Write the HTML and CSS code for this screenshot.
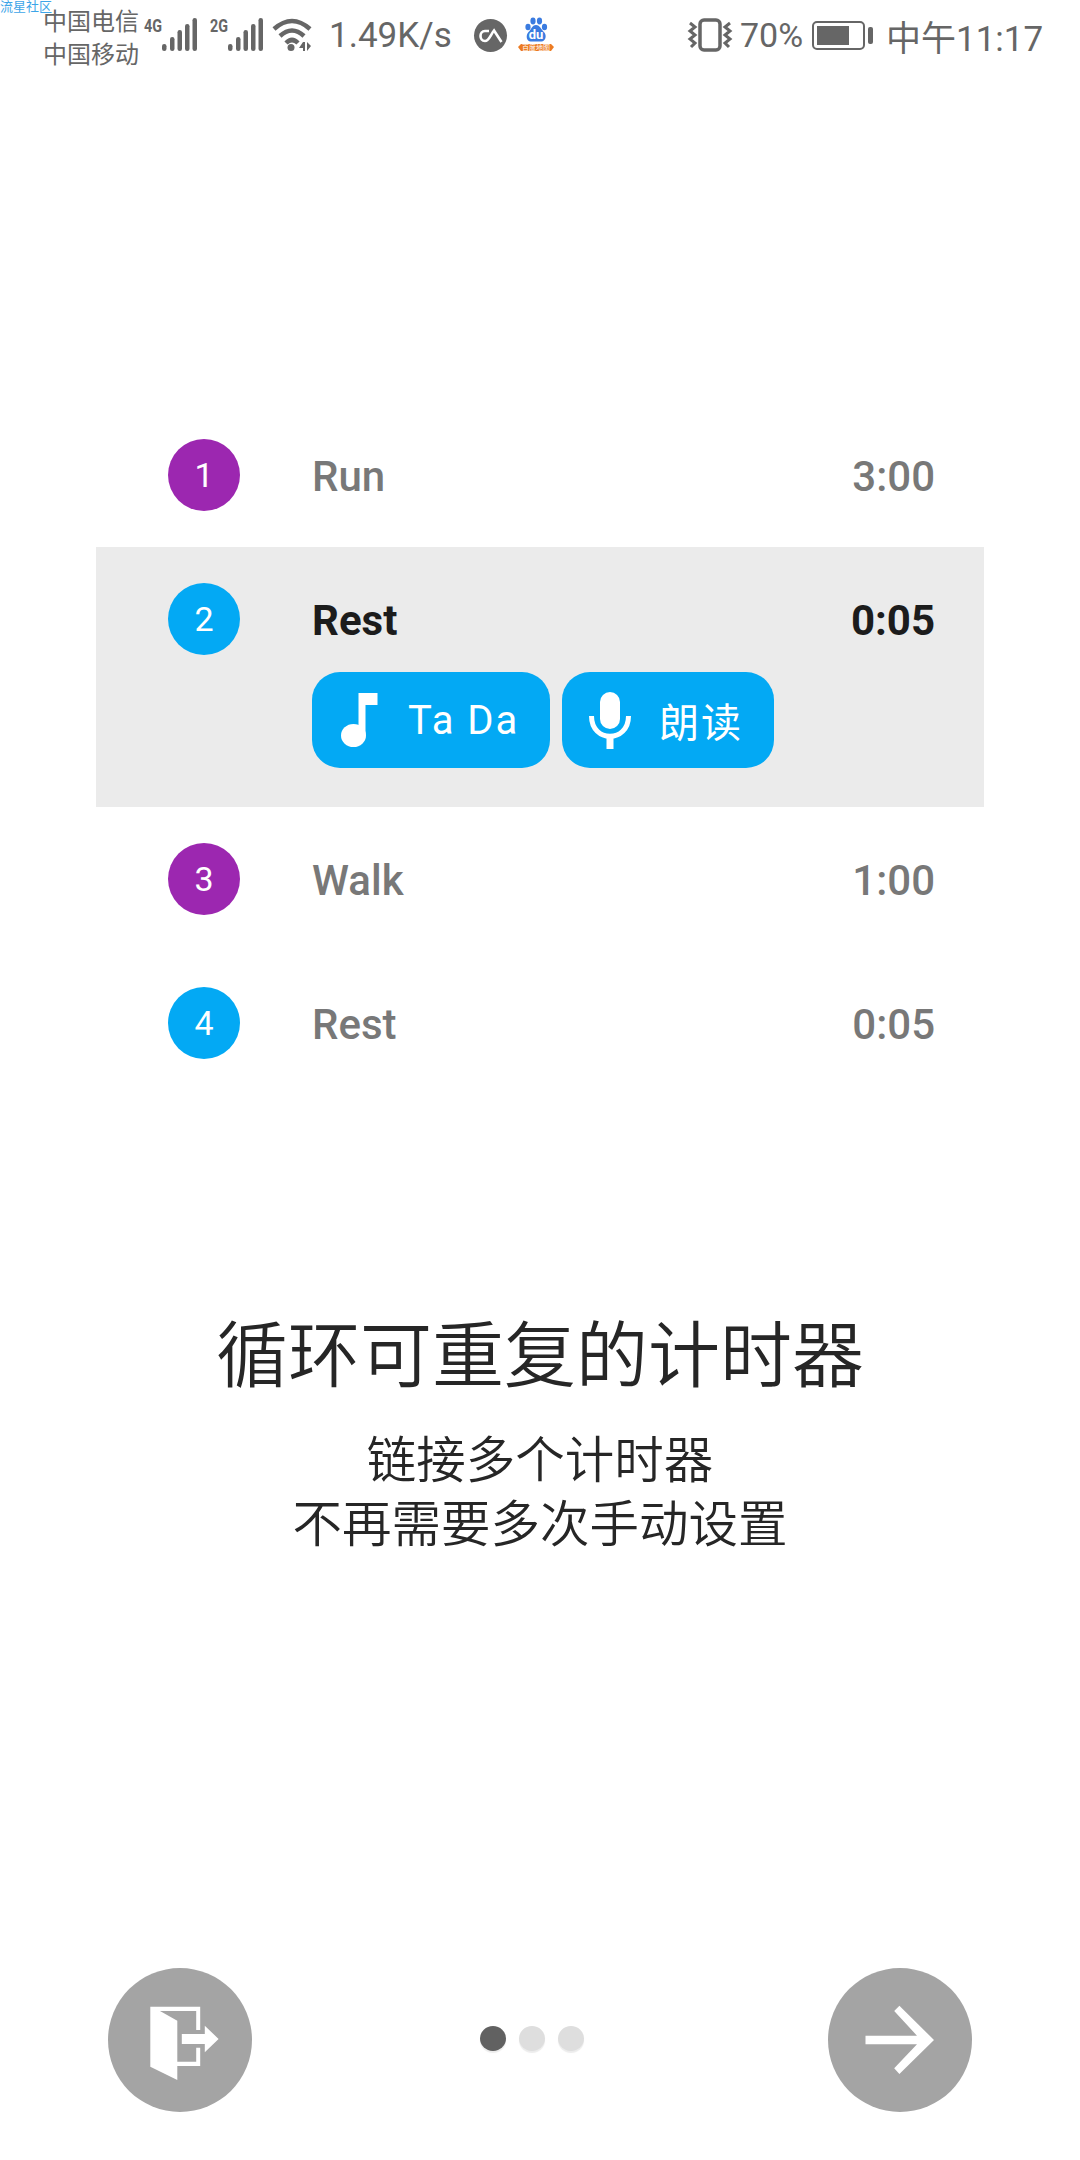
FILE: index.html
```html
<!DOCTYPE html>
<html lang="zh">
<head>
  <meta charset="UTF-8">
  <meta name="viewport" content="width=device-width, initial-scale=1.0">
  <title>循环可重复的计时器</title>
  <link rel="stylesheet" href="styles.css">
</head>
<body>

  <!-- Status bar -->
  <header class="status-bar">
    <span class="watermark">流星社区</span>
    <div class="carriers">
      <span>中国电信</span>
      <span>中国移动</span>
    </div>
    <svg class="signal" width="54" height="34" viewBox="0 0 54 34">
      <text x="0" y="14" class="net-label" textLength="18" lengthAdjust="spacingAndGlyphs">4G</text>
      <g fill="#666">
        <rect x="18" y="26" width="4.5" height="7" rx="2.2"/>
        <rect x="26" y="19" width="4.5" height="14" rx="2.2"/>
        <rect x="33.5" y="12" width="4.5" height="21" rx="2.2"/>
        <rect x="41" y="6" width="4.5" height="27" rx="2.2"/>
        <rect x="48.5" y="0" width="4.5" height="33" rx="2.2"/>
      </g>
    </svg>
    <svg class="signal signal-two" width="54" height="34" viewBox="0 0 54 34">
      <text x="0" y="14" class="net-label" textLength="18" lengthAdjust="spacingAndGlyphs">2G</text>
      <g fill="#666">
        <rect x="18" y="26" width="4.5" height="7" rx="2.2"/>
        <rect x="26" y="19" width="4.5" height="14" rx="2.2"/>
        <rect x="33.5" y="12" width="4.5" height="21" rx="2.2"/>
        <rect x="41" y="6" width="4.5" height="27" rx="2.2"/>
        <rect x="48.5" y="0" width="4.5" height="33" rx="2.2"/>
      </g>
    </svg>
    <svg class="wifi" width="40" height="34" viewBox="0 0 40 34">
      <g fill="none" stroke="#666" stroke-width="4.5">
        <path d="M2 11 Q20 -5 38 11"/>
        <path d="M8 18 Q20 7 32 18"/>
        <path d="M14 25 Q20 19 26 25"/>
      </g>
      <circle cx="19" cy="29.5" r="3.5" fill="#666"/>
      <path d="M31 24 L27 30 H31 V33 H33 V24Z M35 24 V33 L39 28Z" fill="#666"/>
    </svg>
    <span class="speed">1.49K/s</span>
    <svg class="app-icon" width="33" height="33" viewBox="0 0 33 33">
      <circle cx="16.5" cy="16.5" r="16.5" fill="#666"/>
      <path d="M15 12 H11 C5 12 5 22 11 22 C15 22 17 15 20 11.5 L27.5 23" fill="none" stroke="#fff" stroke-width="2.6"/>
    </svg>
    <svg class="baidu" width="36" height="36" viewBox="0 0 36 36">
      <g fill="#3a7be0">
        <ellipse cx="10" cy="10" rx="2.6" ry="3.2"/>
        <ellipse cx="15" cy="4" rx="2.6" ry="3.4"/>
        <ellipse cx="21.5" cy="4" rx="2.6" ry="3.4"/>
        <ellipse cx="26.5" cy="10" rx="2.6" ry="3.2"/>
        <path d="M18 8 C14 8 13 13 10.5 15 C7 19 9 25 13 24.5 L23 24.5 C27 25 29.5 19 26 15 C23.5 13 22 8 18 8Z"/>
      </g>
      <text x="18" y="22" class="baidu-du">du</text>
      <path d="M0 30 L3 27 L33 27 L36 30 L33 34 L3 34Z" fill="#ec7b22"/>
      <text x="18" y="33" class="baidu-tag">百度地图</text>
    </svg>
    <svg class="vibrate" width="44" height="34" viewBox="0 0 44 34">
      <rect x="12" y="2" width="20" height="30" rx="4" fill="none" stroke="#666" stroke-width="3.5"/>
      <path d="M2 5 L7 9 L2 13 L7 17 L2 21 L7 25 L3 29M42 5 L37 9 L42 13 L37 17 L42 21 L37 25 L41 29" fill="none" stroke="#666" stroke-width="3"/>
    </svg>
    <span class="percent">70%</span>
    <div class="battery">
      <div class="battery-body"><div class="battery-level"></div></div>
      <div class="battery-nub"></div>
    </div>
    <span class="clock">中午11:17</span>
  </header>

  <!-- Timer list -->
  <section class="timer-list">
    <div class="timer-row">
      <div class="timer-num num-work">1</div>
      <div class="timer-name">Run</div>
      <div class="timer-time">3:00</div>
    </div>
    <div class="timer-row active">
      <div class="timer-num num-rest">2</div>
      <div class="timer-name">Rest</div>
      <div class="timer-time">0:05</div>
      <div class="timer-actions">
        <button class="action-btn btn-sound">
          <svg width="37" height="54" viewBox="0 0 37 54">
            <ellipse cx="12.5" cy="42.5" rx="12.5" ry="11.5" fill="#fff"/>
            <path d="M17.5 42 V0 H36.5 V12 H24.5 V42Z" fill="#fff"/>
          </svg>
          <span>Ta Da</span>
        </button>
        <button class="action-btn btn-voice">
          <svg width="42" height="57" viewBox="0 0 42 57">
            <rect x="11" y="0" width="20" height="37" rx="10" fill="#fff"/>
            <path d="M2.5 24 C2.5 51 39.5 51 39.5 24" fill="none" stroke="#fff" stroke-width="5"/>
            <rect x="17.5" y="43" width="7" height="14" fill="#fff"/>
          </svg>
          <span>朗读</span>
        </button>
      </div>
    </div>
    <div class="timer-row">
      <div class="timer-num num-work">3</div>
      <div class="timer-name">Walk</div>
      <div class="timer-time">1:00</div>
    </div>
    <div class="timer-row">
      <div class="timer-num num-rest">4</div>
      <div class="timer-name">Rest</div>
      <div class="timer-time">0:05</div>
    </div>
  </section>

  <!-- Intro text -->
  <section class="intro">
    <h1>循环可重复的计时器</h1>
    <p>链接多个计时器<br>不再需要多次手动设置</p>
  </section>

  <!-- Bottom navigation -->
  <footer class="bottom-nav">
    <button class="round-btn">
      <svg width="144" height="144" viewBox="0 0 144 144">
        <path d="M42.3 38.7 H92.2 V62 H88.2 V43 H52 L69.3 52.7 V93.7 H88.2 V79.7 H92.2 V98 H69.3 V112 L42.3 98.7Z" fill="#fff"/>
        <path d="M73.8 66 H96.8 V57.7 L110.6 71 L96.8 84.3 V76 H73.8Z" fill="#fff"/>
      </svg>
    </button>
    <div class="dots">
      <span class="dot current"></span>
      <span class="dot"></span>
      <span class="dot"></span>
    </div>
    <button class="round-btn">
      <svg width="144" height="144" viewBox="0 0 144 144">
        <path d="M37.5 67.7 H89 L66.2 43 L71.4 37.7 L106 72 L71.4 106 L66.2 100.3 L89 76.3 H37.5Z" fill="#fff"/>
      </svg>
    </button>
  </footer>

</body>
</html>
```

FILE: styles.css
```css
body {
  margin: 0;
  height: 2160px;
  display: flex;
  flex-direction: column;
  background-color: #fff;
  font-family: 'Roboto', 'Noto Sans CJK SC', sans-serif;
  overflow: hidden;
}

/* Status bar */
.status-bar {
  position: relative;
  height: 70px;
  display: flex;
  align-items: center;
  padding-left: 43px;
  color: #666;
  font-size: 35px;
}

.status-bar svg { overflow: visible; }

.watermark {
  position: absolute;
  top: 0;
  left: 0;
  font-size: 13px;
  line-height: 14px;
  color: #3da5e8;
}

.carriers {
  display: flex;
  flex-direction: column;
  width: 101px;
  margin-top: 7px;
  font-size: 24px;
  line-height: 33px;
}

.net-label {
  font-family: 'Roboto', sans-serif;
  font-size: 19px;
  font-weight: 700;
  fill: #666;
}

.signal-two { margin-left: 12px; }
.wifi { margin-left: 8px; }
.speed { margin-left: 17px; width: 127px; }
.app-icon { margin-left: 18px; }
.baidu { margin-left: 11px; }
.vibrate { margin-left: 134px; }
.percent { margin-left: 8px; width: 62px; font-size: 34px; }

.baidu-du {
  font-size: 13px;
  font-weight: 700;
  fill: #fff;
  text-anchor: middle;
}

.baidu-tag {
  font-size: 7px;
  fill: #fff;
  text-anchor: middle;
}

.battery {
  margin-left: 10px;
  display: flex;
  align-items: center;
}

.battery-body {
  width: 53px;
  height: 29px;
  box-sizing: border-box;
  border: 2px solid #666;
  border-radius: 5px;
  padding: 3px;
}

.battery-level {
  width: 32px;
  height: 100%;
  background-color: #666;
}

.battery-nub {
  margin-left: 3px;
  width: 5px;
  height: 17px;
  border-radius: 2px;
  background-color: #666;
}

.clock { margin-left: 13px; }

/* Timer list */
.timer-list {
  margin: 333px 96px 0;
}

.timer-row {
  display: grid;
  grid-template-columns: 72px 1fr auto;
  column-gap: 72px;
  align-items: center;
  padding: 36px 49px 36px 72px;
  font-size: 42px;
  font-weight: 500;
  color: #787878;
}

.timer-row.active {
  padding-bottom: 39px;
  background-color: #ebebeb;
  color: #1c1c1c;
  font-weight: 700;
}

.timer-name,
.timer-time {
  margin-top: 3px;
}

.timer-num {
  width: 72px;
  height: 72px;
  border-radius: 50%;
  display: flex;
  align-items: center;
  justify-content: center;
  color: #fff;
  font-size: 34px;
  font-weight: 400;
}

.num-work { background-color: #9c27b0; }
.num-rest { background-color: #03a9f4; }

.timer-actions {
  grid-column: 2 / 4;
  display: flex;
  gap: 12px;
  margin-top: 17px;
}

.action-btn {
  height: 96px;
  display: flex;
  align-items: center;
  border: none;
  border-radius: 28px;
  background-color: #03a9f4;
  color: #fff;
  font-family: inherit;
  font-size: 40px;
  letter-spacing: 2px;
}

.btn-sound { width: 238px; padding: 0 0 0 29px; gap: 30px; }
.btn-voice { width: 212px; padding: 0 0 0 27px; gap: 28px; }

/* Intro text */
.intro {
  margin-top: 217px;
  text-align: center;
  color: #262626;
}

.intro h1 {
  margin: 0;
  font-size: 72px;
  font-weight: 350;
  line-height: 90px;
}

.intro p {
  margin: 27px 0 0;
  font-size: 49.5px;
  font-weight: 350;
  line-height: 64px;
}

/* Bottom navigation */
.bottom-nav {
  margin-top: auto;
  padding: 0 108px 48px;
  display: flex;
  align-items: center;
  justify-content: space-between;
}

.round-btn {
  width: 144px;
  height: 144px;
  padding: 0;
  border: none;
  border-radius: 50%;
  background-color: #a4a4a4;
}

.round-btn svg { display: block; }

.dots {
  display: flex;
  gap: 13px;
  margin: 0 16px 4px 0;
}

.dot {
  width: 26px;
  height: 25px;
  border-radius: 50%;
  background-color: #dedede;
  box-shadow: 0 2px 1px rgba(0, 0, 0, 0.08);
}

.dot.current { background-color: #616161; }
```
